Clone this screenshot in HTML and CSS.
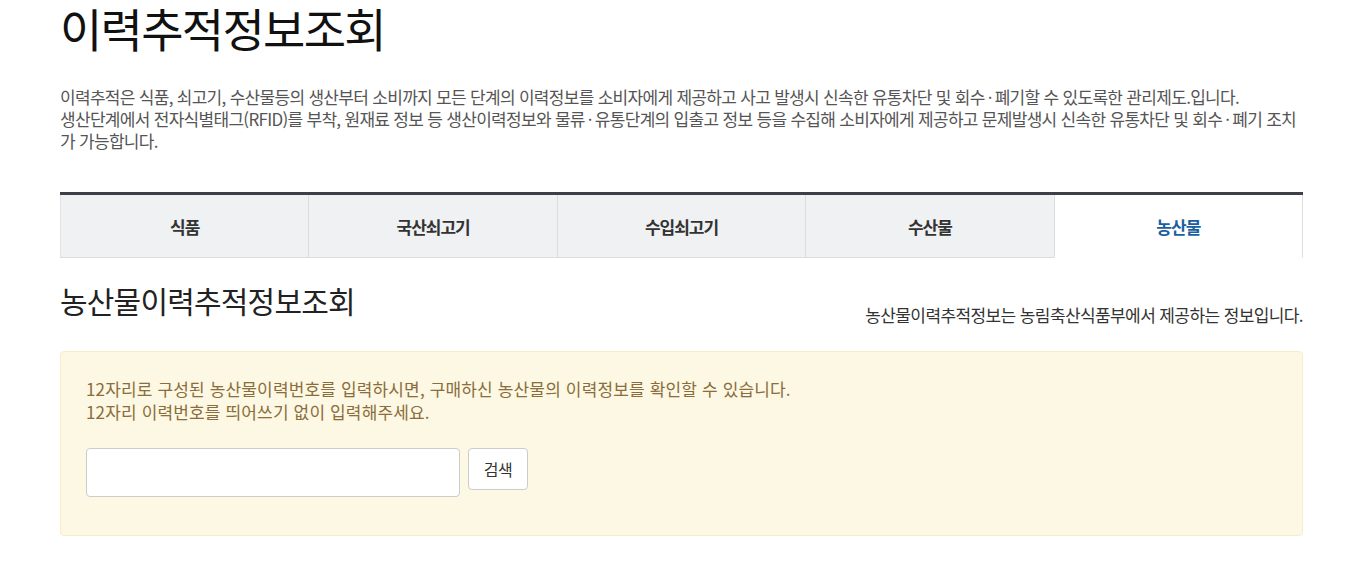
FILE: index.html
```html
<!DOCTYPE html>
<html lang="ko">
<head>
<meta charset="utf-8">
<link rel="stylesheet" href="styles.css">
</head>
<body>
<div class="wrap">
  <h1 class="title">이력추적정보조회</h1>
  <p class="desc">이력추적은 식품, 쇠고기, 수산물등의 생산부터 소비까지 모든 단계의 이력정보를 소비자에게 제공하고 사고 발생시 신속한 유통차단 및 회수<span class="dot">·</span>폐기할 수 있도록한 관리제도.입니다.<br>생산단계에서 전자식별태그(RFID)를 부착, 원재료 정보 등 생산이력정보와 물류<span class="dot">·</span>유통단계의 입출고 정보 등을 수집해 소비자에게 제공하고 문제발생시 신속한 유통차단 및 회수<span class="dot">·</span>폐기 조치가 가능합니다.</p>
  <ul class="tabs">
    <li class="tab">식품</li>
    <li class="tab">국산쇠고기</li>
    <li class="tab">수입쇠고기</li>
    <li class="tab">수산물</li>
    <li class="tab active">농산물</li>
  </ul>
  <div class="subhead">
    <h2 class="subtitle">농산물이력추적정보조회</h2>
    <p class="source">농산물이력추적정보는 농림축산식품부에서 제공하는 정보입니다.</p>
  </div>
  <div class="alert">
    <p class="guide">12자리로 구성된 농산물이력번호를 입력하시면, 구매하신 농산물의 이력정보를 확인할 수 있습니다.<br>12자리 이력번호를 띄어쓰기 없이 입력해주세요.</p>
    <div class="form">
      <input class="field" type="text">
      <button class="btn" type="button">검색</button>
    </div>
  </div>
</div>
</body>
</html>
```
FILE: styles.css
```css
* { box-sizing: border-box; }
html, body { margin: 0; padding: 0; background: #fff; }
body { font-family: "Noto Sans CJK KR", "Noto Sans", sans-serif; color: #333; }
.wrap { width: 1243px; margin-left: 60px; }
.title { margin: 0; padding-top: 1px; font-size: 46px; font-weight: 400; line-height: 52px; letter-spacing: -1.7px; color: #111; }
.desc { margin: 33px 0 0; font-size: 17px; line-height: 22px; letter-spacing: -0.7px; color: #555; }
.dot { margin: 0 3px; }
.tabs { list-style: none; margin: 40px 0 0; padding: 0; display: flex; border-top: 3px solid #3e4049; }
.tab { flex: 1; height: 63px; display: flex; align-items: center; justify-content: center; background: #f0f1f3; border-left: 1px solid #dcdcdc; border-bottom: 1px solid #dcdcdc; font-size: 17px; font-weight: 700; letter-spacing: -1px; color: #333; }
.tab:first-child { border-left: 1px solid #e2e2e2; }
.tab.active { background: #fff; color: #1b5f9e; border-bottom-color: #fff; border-right: 1px solid #dcdcdc; }
.subhead { display: flex; justify-content: space-between; align-items: flex-end; margin-top: 22px; }
.subtitle { margin: 0; font-size: 30px; font-weight: 400; line-height: 40px; letter-spacing: -0.8px; color: #222; }
.source { margin: 0 0 -6px; font-size: 17px; line-height: 22px; letter-spacing: -0.6px; color: #333; }
.alert { margin-top: 31px; background: #fcf8e3; border: 1px solid #faebcc; border-radius: 4px; padding: 25px 25px 38px; }
.guide { margin: 0; font-size: 17px; line-height: 23px; letter-spacing: 0.15px; color: #8a6d3b; }
.form { display: flex; align-items: flex-start; gap: 8px; margin-top: 25px; }
.field { width: 374px; height: 49px; border: 1px solid #cccccc; border-radius: 4px; background: #fff; margin: 0; }
.btn { width: 60px; height: 42px; border: 1px solid #cccccc; border-radius: 4px; background: #fff; font-family: inherit; font-size: 16px; color: #333; letter-spacing: -0.5px; padding: 0; margin: 0; }
```
